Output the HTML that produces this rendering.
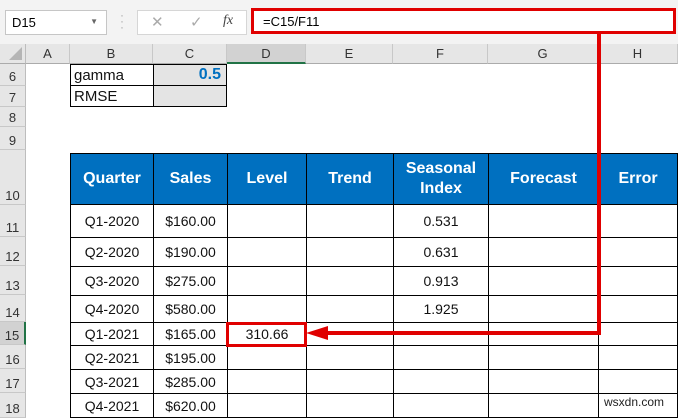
<!DOCTYPE html>
<html><head><style>
body{margin:0;width:678px;height:418px;overflow:hidden;background:#fff;font-family:"Liberation Sans",Calibri,sans-serif;position:relative}
.a{position:absolute;box-sizing:border-box}
.rh{position:absolute;left:0;width:26px;background:#e6e6e6;border-bottom:1px solid #c8c8c8;border-right:1px solid #bdbdbd;font-size:13px;color:#333;text-align:center;box-sizing:border-box;display:flex;align-items:flex-end;justify-content:center;padding-bottom:1px}
.ch{position:absolute;top:44px;height:20px;background:#e6e6e6;border-right:1px solid #c8c8c8;border-bottom:1px solid #ababab;font-size:13px;color:#333;text-align:center;line-height:20px;box-sizing:border-box}
.c{position:absolute;box-sizing:border-box;border:1px solid #000;font-size:14px;display:flex;align-items:center;justify-content:center;color:#111}
.h{background:#0070c0;color:#fff;font-weight:bold;font-size:16px;text-align:center;line-height:20px;border:1.5px solid #000}
</style></head><body>
<div class="a" style="left:0;top:0;width:678px;height:44px;background:#f3f3f3"></div>
<div class="a" style="left:5px;top:10px;width:102px;height:25px;background:#fff;border:1px solid #c6c6c6;font-size:13px;padding:4px 0 0 6px">D15<span style="position:absolute;right:8px;top:6px;font-size:8px;color:#666">▼</span></div>
<div class="a" style="left:120px;top:12px;color:#aaa;font-size:12px;line-height:6px">·<br>·<br>·</div>
<div class="a" style="left:137px;top:10px;width:110px;height:25px;background:#fff;border:1px solid #d6d6d6;font-size:15px;color:#aaa"><span style="position:absolute;left:13px;top:2px">✕</span><span style="position:absolute;left:52px;top:2px">✓</span><span style="position:absolute;left:85px;top:2px;color:#444;font-style:italic;font-family:'Liberation Serif',serif;font-size:14px">fx</span></div>
<div class="a" style="left:251px;top:8px;width:425px;height:26px;background:#fff;border:3px solid #e00000;font-size:13px;padding:3px 0 0 9px">=C15/F11</div>
<div class="a" style="left:0;top:44px;width:26px;height:20px;background:#e6e6e6;border-right:1px solid #bdbdbd;border-bottom:1px solid #ababab"><div style="position:absolute;right:3px;bottom:3px;width:0;height:0;border-left:13px solid transparent;border-bottom:13px solid #b5b5b5"></div></div>
<div class="ch" style="left:26px;width:44px">A</div>
<div class="ch" style="left:70px;width:83px">B</div>
<div class="ch" style="left:153px;width:74px">C</div>
<div class="ch" style="left:227px;width:79px;background:#d2d2d2;border-bottom:2px solid #217346">D</div>
<div class="ch" style="left:306px;width:87px">E</div>
<div class="ch" style="left:393px;width:95px">F</div>
<div class="ch" style="left:488px;width:110px">G</div>
<div class="ch" style="left:598px;width:80px">H</div>
<div class="rh" style="top:64px;height:22px">6</div>
<div class="rh" style="top:86px;height:21px">7</div>
<div class="rh" style="top:107px;height:20px">8</div>
<div class="rh" style="top:127px;height:23px">9</div>
<div class="rh" style="top:150px;height:55px">10</div>
<div class="rh" style="top:205px;height:32px">11</div>
<div class="rh" style="top:237px;height:29px">12</div>
<div class="rh" style="top:266px;height:29px">13</div>
<div class="rh" style="top:295px;height:27px">14</div>
<div class="rh" style="top:322px;height:23px;background:#d2d2d2;border-right:2px solid #217346">15</div>
<div class="rh" style="top:345px;height:24px">16</div>
<div class="rh" style="top:369px;height:24px">17</div>
<div class="rh" style="top:393px;height:25px">18</div>

<div class="c" style="left:70px;top:64px;width:84px;height:22px;justify-content:flex-start;padding-left:3px;font-size:15px">gamma</div>
<div class="c" style="left:153px;top:64px;width:74px;height:22px;background:#e4e4e4;justify-content:flex-end;padding-right:5px;color:#0070c0;font-weight:bold;font-size:16px">0.5</div>
<div class="c" style="left:70px;top:85px;width:84px;height:22px;justify-content:flex-start;padding-left:3px;font-size:15px">RMSE</div>
<div class="c" style="left:153px;top:85px;width:74px;height:22px;background:#e4e4e4"></div>

<div id="t"></div>
<script>
var xs=[70,153,227,306,393,488,598,677];
var ys=[153,204,237,266,295,322,345,369,393,417];
var H=["Quarter","Sales","Level","Trend","Seasonal<br>Index","Forecast","Error"];
var Q=["Q1-2020","Q2-2020","Q3-2020","Q4-2020","Q1-2021","Q2-2021","Q3-2021","Q4-2021"];
var S=["$160.00","$190.00","$275.00","$580.00","$165.00","$195.00","$285.00","$620.00"];
var F=["0.531","0.631","0.913","1.925","","","",""];
var h="";
for(var r=0;r<9;r++)for(var c=0;c<7;c++){
 var t="";
 if(r==0)t=H[c];else{ if(c==0)t=Q[r-1]; if(c==1)t=S[r-1]; if(c==4)t=F[r-1]; if(c==2&&r==5)t="310.66";}
 h+='<div class="c'+(r==0?' h':'')+'" style="left:'+xs[c]+'px;top:'+ys[r]+'px;width:'+(xs[c+1]-xs[c]+1)+'px;height:'+(ys[r+1]-ys[r]+1)+'px">'+t+'</div>';
}
document.getElementById("t").innerHTML=h;
</script>
<div class="a" style="left:226px;top:322px;width:81px;height:25px;border:3px solid #e00000"></div>
<div class="a" style="left:597px;top:33px;width:4px;height:301px;background:#e00000"></div>
<div class="a" style="left:325px;top:331px;width:276px;height:4px;background:#e00000"></div>
<svg class="a" style="left:306px;top:324px" width="24" height="20"><polygon points="0,9 22,2 22,16" fill="#e00000"/></svg>
<div class="a" style="left:604px;top:395px;font-size:12px;color:#222">wsxdn.com</div>
</body></html>
